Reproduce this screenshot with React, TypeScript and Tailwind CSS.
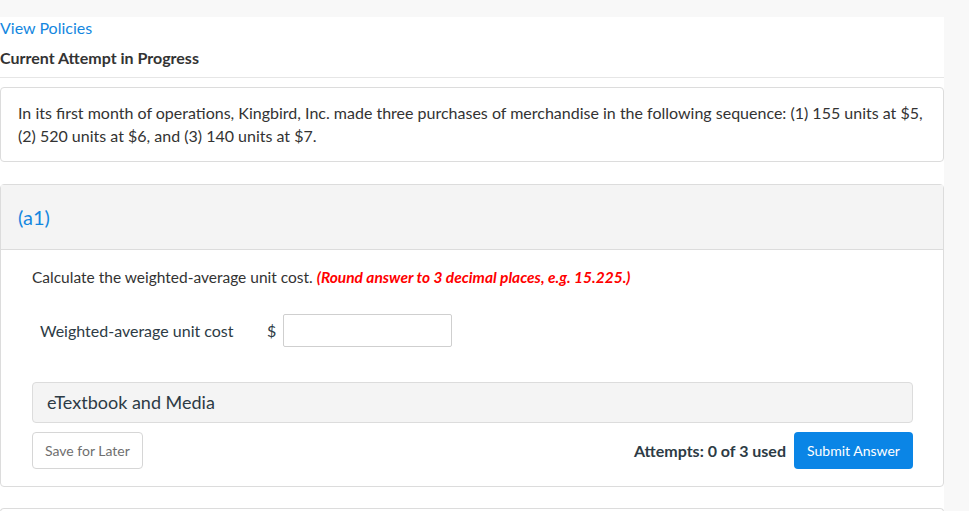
import React from 'react';

const font = { fontFamily: 'Lato, "Open Sans", sans-serif' };

export default function App() {
  return (
    <div className="min-h-[511px] bg-[#f8f8f8] pt-[17px] text-[#2d3b45]" style={font}>
      <div className="w-[944px] bg-white">
        <a href="#" className="block text-[16px] leading-[22px] text-[#1487e0]">
          View Policies
        </a>
        <div className="mt-[8px] pb-[8px] text-[16px] font-bold leading-[22px] text-[#333] border-b border-[#e6e6e6]">
          Current Attempt in Progress
        </div>

        <div className="mt-[9px] rounded border border-[#dcdcdc] px-[17px] pt-[13px] pb-[14px] text-[16px] leading-[23px] text-[#333]">
          In its first month of operations, Kingbird, Inc. made three purchases of merchandise in the following sequence: (1) 155 units at $5,
          (2) 520 units at $6, and (3) 140 units at $7.
        </div>

        <div className="mt-[22px] rounded border border-[#dcdcdc]">
          <div className="h-[65px] bg-[#f4f4f4] border-b border-[#dcdcdc] flex items-center px-[17px]">
            <span className="text-[20px] text-[#1487e0]">(a1)</span>
          </div>
          <div className="pl-[31px] pr-[30px] pt-[16px] pb-[17px]">
            <p className="text-[15.5px] leading-[22px] text-[#333]">
              Calculate the weighted-average unit cost.{' '}
              <span className="font-bold italic text-[#f00]">(Round answer to 3 decimal places, e.g. 15.225.)</span>
            </p>
            <div className="mt-[26px] flex items-center pl-[8px]">
              <span className="text-[16px] w-[227px]">Weighted-average unit cost</span>
              <span className="text-[16px] w-[16px]">$</span>
              <input
                type="text"
                className="w-[169px] h-[33px] border border-[#cfcfcf] rounded-[2px] outline-none"
              />
            </div>
            <div className="mt-[35px] h-[41px] rounded border border-[#dcdcdc] bg-[#f4f4f4] flex items-center px-[14px] text-[18px]">
              eTextbook and Media
            </div>
            <div className="mt-[9px] flex items-center justify-between">
              <button className="h-[37px] px-[12px] rounded border border-[#d6d6d6] text-[14px] text-[#6f6f6f] bg-white">
                Save for Later
              </button>
              <div className="flex items-center gap-[8px]">
                <span className="text-[16px] font-bold">Attempts: 0 of 3 used</span>
                <button className="h-[37px] w-[119px] rounded bg-[#0a85e6] text-white text-[14px]">
                  Submit Answer
                </button>
              </div>
            </div>
          </div>
        </div>

        <div className="mt-[21px] h-[10px] border-t border-x border-[#dcdcdc] rounded-t" />
      </div>
    </div>
  );
}
